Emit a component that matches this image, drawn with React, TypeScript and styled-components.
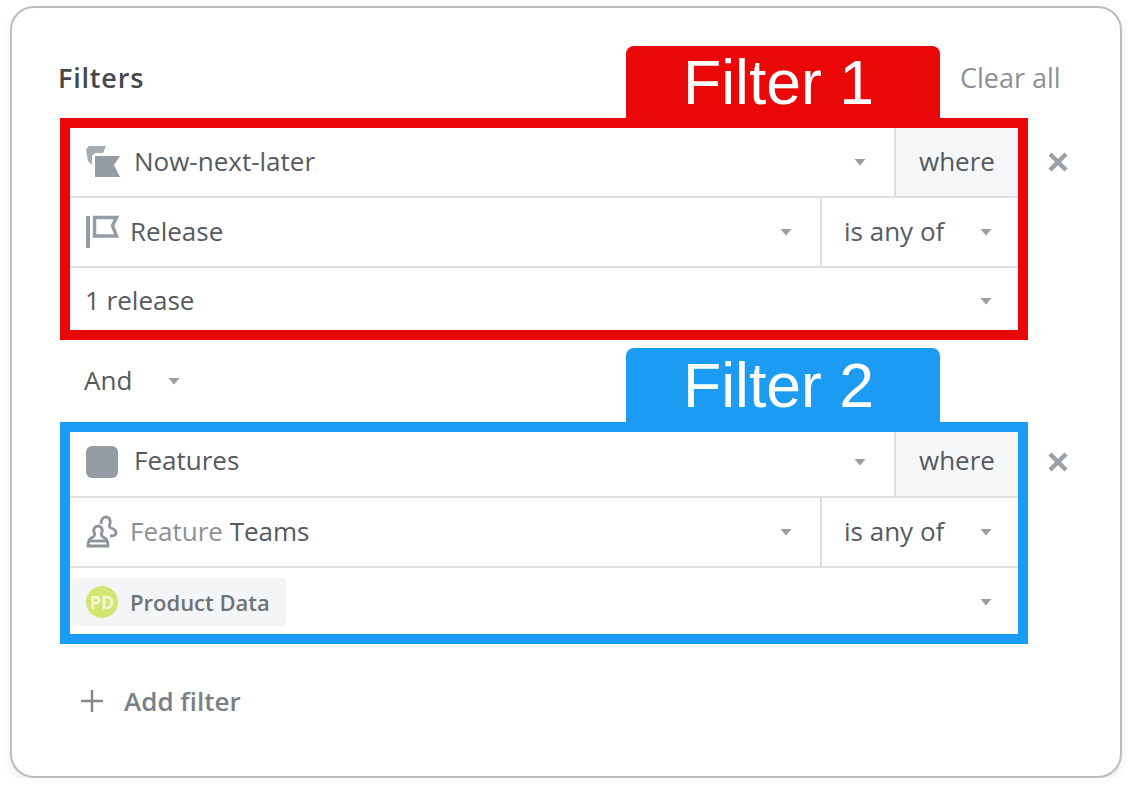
import React from 'react';
import styled, { createGlobalStyle } from 'styled-components';

const RED = '#e90707';
const BLUE = '#1b9cf2';

const GlobalStyle = createGlobalStyle`
    html, body {
        margin : 0;
        padding : 0;
        background : #fff;
    }
    body {
        font-family : 'Open Sans', 'Liberation Sans', sans-serif;
    }
`

const Card = styled.div`
    box-sizing : border-box;
    width : 1112px;
    height : 772px;
    margin : 6px 0 0 10px;
    padding : 38px 0 0 48px;
    background : #fff;
    border : 2px solid #bcbcbc;
    border-radius : 24px;
    box-shadow : 0 4px 8px rgba(0, 0, 0, 0.08);
`

const TabRow = styled.div<{ $height: number; $gap?: number }>`
    display : grid;
    grid-template-columns : 566px 314px 1fr;
    height : ${({ $height }) => $height}px;
    margin-top : ${({ $gap }) => $gap || 0}px;
`

const Slot = styled.div<{ $drop?: number }>`
    display : flex;
    align-items : center;
    height : 64px;
    padding : ${({ $drop }) => $drop || 0}px 0 2px;
    box-sizing : border-box;
`

const Title = styled.span`
    margin-left : -2px;
    color : #45494e;
    font-size : 27px;
    font-weight : 600;
    letter-spacing : 0.8px;
`

const ClearAll = styled.span`
    margin-left : 20px;
    color : #8b9096;
    font-size : 27px;
    font-weight : 500;
`

const AndSelect = styled.div`
    display : flex;
    align-items : center;
    gap : 36px;
    padding-left : 24px;
    color : #555a60;
`

const Tab = styled.div<{ $color: string }>`
    display : flex;
    align-items : center;
    padding-left : 57px;
    background : ${({ $color }) => $color};
    border-radius : 8px 8px 0 0;
    color : #fff;
    font-family : 'Liberation Sans', Arial, sans-serif;
    font-size : 62.5px;
    white-space : nowrap;
`

const GroupRow = styled.div`
    display : flex;
    align-items : flex-start;
`

const Box = styled.div<{ $color: string }>`
    box-sizing : border-box;
    width : 968px;
    height : 222px;
    border : 10px solid ${({ $color }) => $color};
    background : #fff;
`

const Row = styled.div<{ $height: number; $divider?: boolean }>`
    box-sizing : border-box;
    display : flex;
    height : ${({ $height }) => $height}px;
    border-top : ${({ $divider }) => ($divider ? '2px solid #dcdee0' : 'none')};
`

const Cell = styled.div<{ $gap?: number; $pad?: number; $right?: number; $lift?: number; $drop?: number }>`
    flex : 1;
    display : flex;
    align-items : center;
    gap : ${({ $gap }) => $gap || 0}px;
    padding : ${({ $drop }) => $drop || 0}px ${({ $right }) => $right || 0}px ${({ $lift }) => $lift || 0}px ${({ $pad }) => $pad || 0}px;
    min-width : 0;
`

const SideCell = styled.div<{ $width: number; $shaded?: boolean; $center?: boolean; $lift?: number }>`
    box-sizing : border-box;
    display : flex;
    align-items : center;
    justify-content : ${({ $center }) => ($center ? 'center' : 'flex-start')};
    flex : 0 0 ${({ $width }) => $width}px;
    padding : ${({ $center }) => ($center ? '0' : '0 26px 0 22px')};
    padding-bottom : ${({ $lift }) => $lift || 0}px;
    border-left : 2px solid #dcdee0;
    background : ${({ $shaded }) => ($shaded ? '#f5f7f9' : 'transparent')};
`

const Label = styled.span<{ $muted?: boolean }>`
    padding-bottom : 3px;
    color : ${({ $muted }) => ($muted ? '#8d9196' : '#555a60')};
    font-size : 26px;
    white-space : nowrap;
`

const Spacer = styled.div`
    flex : 1;
`

const Swatch = styled.div`
    flex : none;
    width : 32px;
    height : 32px;
    background : #959ca6;
    border-radius : 6px;
`

const Chip = styled.div`
    display : flex;
    align-items : center;
    gap : 12px;
    height : 48px;
    margin-left : 2px;
    padding : 0 16px 0 14px;
    background : #f3f5f7;
    border-radius : 4px;
    color : #6e7378;
    font-size : 22px;
    font-weight : 600;
`

const Avatar = styled.span`
    display : flex;
    align-items : center;
    justify-content : center;
    width : 32px;
    height : 32px;
    background : #d3e573;
    border-radius : 50%;
    color : #f3f8d3;
    font-size : 18px;
    font-weight : 700;
`

const RemoveButton = styled.button<{ $top: number }>`
    display : flex;
    padding : 0;
    margin : ${({ $top }) => $top}px 0 0 19px;
    background : none;
    border : none;
`

const AddFilter = styled.div`
    display : flex;
    align-items : center;
    gap : 21px;
    height : 40px;
    margin-top : 37px;
    padding-left : 21px;
    color : #7b8086;
    font-size : 26px;
    font-weight : 600;
`

const Caret = () => (
    <svg width="12" height="8" viewBox="0 0 12 8" style={{ flex: 'none' }}>
        <path d="M0.5 1h11L6 7.5z" fill="#9c9c9c" />
    </svg>
)

const BoardIcon = () => (
    <svg width="34" height="34" viewBox="0 0 34 34" style={{ flex: 'none' }}>
        <path d="M0 4.500 3 1h17l-3 7H9L6 11v9L2 16z" fill="#a5abb3" />
        <path d="M9 11h25l-6 9 6 12H9z" fill="#959ca6" />
    </svg>
)

const FlagIcon = () => (
    <svg width="34" height="34" viewBox="0 0 34 34" style={{ flex: 'none' }}>
        <path d="M2 1v32" stroke="#959ca6" strokeWidth="4" />
        <path d="M8.500 21V2.500h22l-4 8 4 10.500z" fill="none" stroke="#959ca6" strokeWidth="3.500" />
    </svg>
)

const TeamIcon = () => (
    <svg width="32" height="34" viewBox="0 0 32 34" style={{ flex: 'none' }} fill="none" stroke="#8d939b" strokeWidth="2.800">
        <path d="M2 31c0-5 1-7 5-9 2-1 2-3 1-5-1-3 1-6 4-6s5 3 4 6c-1 2-1 4 1 5 4 2 5 4 5 9z" />
        <path d="M15 9c0-4 2-7 5-7s5 3 4 7c-1 2-1 3 1 4" />
        <path d="M25 13c3 1 5 3 5 5s-3 3-6 3" />
        <path d="M2 26h20" />
    </svg>
)

const CloseIcon = () => (
    <svg width="22" height="22" viewBox="0 0 22 22">
        <path d="M3 3l16 16M19 3L3 19" stroke="#9aa0a6" strokeWidth="4.500" />
    </svg>
)

const PlusIcon = () => (
    <svg width="22" height="24" viewBox="0 0 22 24">
        <path d="M0 12h22M11 1v22" stroke="#85898e" strokeWidth="2.500" />
    </svg>
)

export default function App() {
    return (
        <>
        <GlobalStyle />
        <Card>
            <TabRow $height={72}>
                <Slot>
                    <Title>Filters</Title>
                </Slot>
                <Tab $color={RED}>Filter 1</Tab>
                <Slot>
                    <ClearAll>Clear all</ClearAll>
                </Slot>
            </TabRow>
            <GroupRow>
                <Box $color={RED}>
                    <Row $height={68}>
                        <Cell $pad={16} $gap={14} $right={28}>
                            <BoardIcon />
                            <Label>Now-next-later</Label>
                            <Spacer />
                            <Caret />
                        </Cell>
                        <SideCell $width={124} $shaded $center>
                            <Label>where</Label>
                        </SideCell>
                    </Row>
                    <Row $height={70} $divider>
                        <Cell $pad={16} $gap={10} $right={28}>
                            <FlagIcon />
                            <Label>Release</Label>
                            <Spacer />
                            <Caret />
                        </Cell>
                        <SideCell $width={198}>
                            <Label>is any of</Label>
                            <Spacer />
                            <Caret />
                        </SideCell>
                    </Row>
                    <Row $height={64} $divider>
                        <Cell $pad={15} $right={26} $drop={4}>
                            <Label>1 release</Label>
                            <Spacer />
                            <Caret />
                        </Cell>
                    </Row>
                </Box>
                <RemoveButton $top={33}>
                    <CloseIcon />
                </RemoveButton>
            </GroupRow>
            <TabRow $height={74} $gap={8}>
                <Slot $drop={4}>
                    <AndSelect>
                        <Label>And</Label>
                        <Caret />
                    </AndSelect>
                </Slot>
                <Tab $color={BLUE}>Filter 2</Tab>
            </TabRow>
            <GroupRow>
                <Box $color={BLUE}>
                    <Row $height={64}>
                        <Cell $pad={16} $gap={16} $right={28} $lift={5}>
                            <Swatch />
                            <Label>Features</Label>
                            <Spacer />
                            <Caret />
                        </Cell>
                        <SideCell $width={124} $shaded $center $lift={5}>
                            <Label>where</Label>
                        </SideCell>
                    </Row>
                    <Row $height={70} $divider>
                        <Cell $pad={16} $gap={12} $right={28}>
                            <TeamIcon />
                            <Label>
                                <Label $muted>Feature</Label> Teams
                            </Label>
                            <Spacer />
                            <Caret />
                        </Cell>
                        <SideCell $width={198}>
                            <Label>is any of</Label>
                            <Spacer />
                            <Caret />
                        </SideCell>
                    </Row>
                    <Row $height={68} $divider>
                        <Cell $right={26} $drop={2}>
                            <Chip>
                                <Avatar>PD</Avatar>
                                Product Data
                            </Chip>
                            <Spacer />
                            <Caret />
                        </Cell>
                    </Row>
                </Box>
                <RemoveButton $top={29}>
                    <CloseIcon />
                </RemoveButton>
            </GroupRow>
            <AddFilter>
                <PlusIcon />
                Add filter
            </AddFilter>
        </Card>
        </>
    )
}
